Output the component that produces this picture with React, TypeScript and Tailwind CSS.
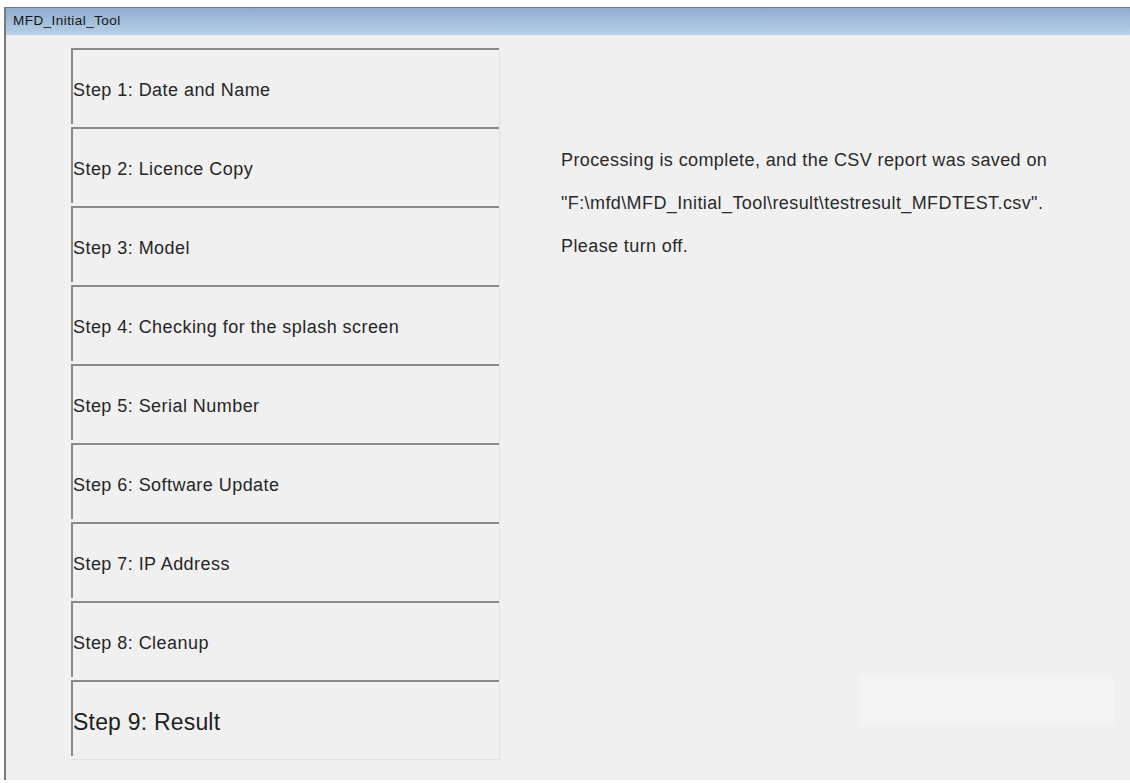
import React from 'react';

const steps = [
    'Step 1: Date and Name',
    'Step 2: Licence Copy',
    'Step 3: Model',
    'Step 4: Checking for the splash screen',
    'Step 5: Serial Number',
    'Step 6: Software Update',
    'Step 7: IP Address',
    'Step 8: Cleanup',
    'Step 9: Result',
];

const CURRENT_STEP = 8;

const StepRow: React.FC<{ label: string; active: boolean }> = ({ label, active }) => (
    <div className="flex h-[79px] border-t-2 border-[#8a8a8a]">
        {/* sunken left edge stops short of the next row */}
        <div className="w-[2px] mb-[3px] bg-[#8a8a8a] shrink-0" />
        <div className="flex items-center pt-[4px]">
            <span
                className={
                    active
                        ? 'text-[23px] text-[#1e1e1e] tracking-[0.2px]'
                        : 'text-[18px] text-[#262626] tracking-[0.45px]'
                }
            >
                {label}
            </span>
        </div>
    </div>
);

export default function App() {
    return (
        <div
            className="w-[1130px] h-[783px] bg-white pt-[7px] pl-[4px] overflow-hidden"
            style={{ fontFamily: '"Liberation Sans", Arial, sans-serif' }}
        >
            <div className="h-[773px] border-l-2 border-[#7a7a7a] bg-[#f0f0f0] flex flex-col">
                {/* Title bar */}
                <div className="h-[28px] border-t border-[#6f7780] bg-gradient-to-b from-[#8fadcc] to-[#b8d0e9] flex items-center pl-[7px] shrink-0">
                    <span className="text-[13.5px] text-[#141414] tracking-[0.45px]">MFD_Initial_Tool</span>
                </div>
                <div className="h-[1px] bg-[#e8ecf0]" />

                {/* Body */}
                <div className="flex flex-1">
                    <div className="ml-[65px] mt-[12px] w-[429px] h-[712px] border-r border-b border-[#e2e2e2] flex flex-col">
                        {steps.map((s, i) => (
                            <StepRow key={s} label={s} active={i === CURRENT_STEP} />
                        ))}
                    </div>

                    <div className="flex flex-col flex-1">
                        <div className="ml-[61px] mt-[103px] text-[18px] text-[#2a2a2a] tracking-[0.4px] leading-[43px]">
                            <p>Processing is complete, and the CSV report was saved on</p>
                            <p>"F:\mfd\MFD_Initial_Tool\result\testresult_MFDTEST.csv".</p>
                            <p>Please turn off.</p>
                        </div>
                        <div className="mt-auto mb-[54px] ml-[360px] w-[254px] h-[50px] bg-[#f3f3f3]" />
                    </div>
                </div>
            </div>
        </div>
    );
}
